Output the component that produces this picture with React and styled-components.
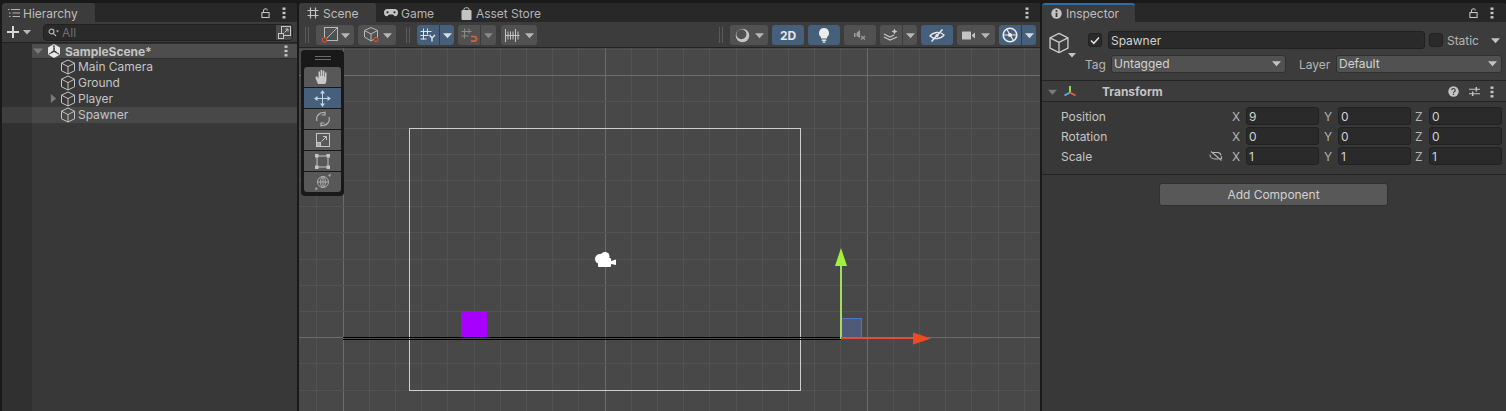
import React from 'react'
import styled, { createGlobalStyle, css } from 'styled-components'

const Global = createGlobalStyle`
  html, body { margin: 0; padding: 0; background: #191919; overflow: hidden; }
  * { box-sizing: border-box; }
`

const Editor = styled.div`
  display: flex;
  gap: 2px;
  width: 1506px;
  height: 411px;
  padding: 3px 0 0 2px;
  background: #191919;
  font-family: Inter, "Noto Sans", sans-serif;
  font-size: 12px;
  letter-spacing: -0.03px;
  color: #c4c4c4;
  overflow: hidden;
`

const Panel = styled.section`
  display: flex;
  flex-direction: column;
  width: ${p => p.$w}px;
  flex: none;
  background: #383838;
  border-radius: 3px 3px 0 0;
  overflow: hidden;
`

const TabBar = styled.div`
  display: flex;
  align-items: stretch;
  height: 19px;
  flex: none;
  background: #282828;
`

const Tab = styled.div`
  display: flex;
  align-items: center;
  gap: ${p => p.$gap || 5}px;
  width: ${p => p.$w}px;
  padding-left: ${p => p.$pad || 8}px;
  padding-top: ${p => (p.$accent ? 0 : 1)}px;
  background: ${p => (p.$active ? '#3c3c3c' : 'transparent')};
  border-top: ${p => (p.$accent ? '2px solid #2c6ea8' : 'none')};
  color: ${p => (p.$active ? '#bdbdbd' : '#b4b4b4')};
  border-radius: 3px 3px 0 0;
`

const TabIcons = styled.div`
  display: flex;
  align-items: center;
  gap: 12px;
  margin-left: auto;
  padding-right: ${p => p.$pad || 8}px;
`

const Toolbar = styled.div`
  display: flex;
  align-items: center;
  flex: none;
  height: ${p => p.$h}px;
  padding-top: ${p => p.$top || 0}px;
  background: #3c3c3c;
  border-bottom: 1px solid #232323;
`

const AddButton = styled.div`
  display: flex;
  align-items: center;
  gap: 4px;
  width: 41px;
  padding-left: 5px;
`

const SearchBox = styled.div`
  display: flex;
  width: 250px;
  height: 17px;
  background: #2a2a2a;
  border: 1px solid #212121;
  border-radius: 4px;
  align-items: center;
  padding-left: 4px;
  gap: 3px;
  color: #6e6e6e;
`

const SearchEnd = styled.div`
  display: flex;
  align-items: center;
  justify-content: center;
  width: 16px;
  height: 15px;
  margin-left: auto;
  background: #4a4a4a;
  border-radius: 0 3px 3px 0;
`

const Tree = styled.div`
  flex: 1;
  background: linear-gradient(90deg, #303030 0 30px, #383838 30px);
`

const SceneRow = styled.div`
  display: flex;
  align-items: center;
  height: 16px;
  margin-left: 30px;
  padding-right: 9px;
  background: #4d4d4d;
  border-top: 1px solid #2e2e2e;
  border-bottom: 1px solid #2e2e2e;
  font-weight: 700;
  color: #c4c4c4;
`

const TreeRow = styled.div`
  display: flex;
  align-items: center;
  height: 16px;
  padding-bottom: 1px;
  background: ${p => (p.$selected ? 'linear-gradient(90deg, #3e3e3e 0 30px, #484848 30px)' : 'transparent')};
  color: #c4c4c4;
  white-space: nowrap;
`

const Caret = styled.div`
  width: ${p => p.$w}px;
  flex: none;
  display: flex;
  justify-content: flex-end;
  align-items: center;
  padding-right: ${p => p.$pad || 0}px;
`

const Grip = styled.div`
  width: 4px;
  height: 16px;
  flex: none;
  margin: ${p => p.$m};
  border-left: 1px solid #5a5a5a;
  border-right: 1px solid #5a5a5a;
`

const segment = css`
  display: flex;
  align-items: center;
  justify-content: center;
  height: 20px;
  flex: none;
  background: ${p => (p.$on ? '#46607c' : '#515151')};
`

const ToolButton = styled.div`
  ${segment}
  width: ${p => p.$w}px;
  margin-left: ${p => p.$ml || 0}px;
  gap: ${p => p.$gap || 2}px;
  border-radius: 3px;
  color: #e6e6e6;
  font-weight: 700;
  font-size: 12px;
`

const Split = styled.div`
  display: flex;
  flex: none;
  gap: 1px;
  margin-left: ${p => p.$ml || 0}px;
  margin-right: ${p => p.$mr || 0}px;
`

const SplitMain = styled.div`
  ${segment}
  width: ${p => p.$w}px;
  border-radius: 3px 0 0 3px;
`

const SplitDrop = styled.div`
  ${segment}
  width: ${p => p.$w || 14}px;
  border-radius: 0 3px 3px 0;
`

const Viewport = styled.div`
  position: relative;
  flex: 1;
  background: #484848;
  overflow: hidden;
`

const SceneSvg = styled.svg`
  display: block;
  width: 741px;
  height: 363px;
`

const ToolBox = styled.div`
  position: absolute;
  left: 2px;
  top: 2px;
  width: 43px;
  height: 146px;
  padding: 0 3px;
  background: #191919;
  border-radius: 4px;
`

const ToolGrip = styled.div`
  width: 16px;
  height: 4px;
  margin: 6px auto 7px;
  border-top: 1px solid #6a6a6a;
  border-bottom: 1px solid #6a6a6a;
`

const ToolItem = styled.div`
  display: flex;
  align-items: center;
  justify-content: center;
  height: 20px;
  margin-bottom: 1px;
  background: ${p => (p.$on ? '#46607c' : '#585858')};
  border-radius: ${p => p.$r || '0'};
`

const InspectorHead = styled.div`
  display: flex;
  flex: none;
  height: 59px;
  background: #3c3c3c;
  border-bottom: 1px solid #232323;
  padding: 9px 4px 0 6px;
`

const ObjectIcon = styled.div`
  position: relative;
  width: 37px;
  flex: none;
  padding-top: 1px;
`

const DropMark = styled.div`
  position: absolute;
  display: flex;
  left: 20px;
  top: 20px;
`

const HeadRows = styled.div`
  display: flex;
  flex-direction: column;
  flex: 1;
  gap: 6px;
`

const HeadRow = styled.div`
  display: flex;
  align-items: center;
  height: 18px;
`

const Check = styled.div`
  display: flex;
  align-items: center;
  justify-content: center;
  width: 14px;
  height: 14px;
  flex: none;
  margin-left: ${p => p.$ml}px;
  background: #2a2a2a;
  border: 1px solid #212121;
  border-radius: 3px;
`

const TextField = styled.div`
  display: flex;
  align-items: center;
  width: ${p => p.$w}px;
  height: ${p => p.$h || 18}px;
  flex: none;
  margin-left: ${p => p.$ml || 0}px;
  padding-left: 2px;
  background: #2a2a2a;
  border: 1px solid #212121;
  border-radius: 3px;
  color: #d2d2d2;
`

const Label = styled.span`
  display: flex;
  flex: none;
  width: ${p => (p.$w ? `${p.$w}px` : 'auto')};
  margin-left: ${p => p.$ml || 0}px;
  color: ${p => p.$color || '#b4b4b4'};
`

const Dropdown = styled.div`
  display: flex;
  align-items: center;
  justify-content: space-between;
  width: ${p => p.$w}px;
  height: 18px;
  flex: none;
  margin-left: ${p => p.$ml || 0}px;
  padding: 0 4px 1px 2px;
  background: #515151;
  border: 1px solid #303030;
  border-radius: 3px;
  color: #d2d2d2;
`

const ComponentHead = styled.div`
  display: flex;
  align-items: center;
  flex: none;
  height: 21px;
  padding: 1px 12px 0 6px;
  background: #3c3c3c;
  border-bottom: 1px solid #232323;
  font-weight: 700;
  color: #c4c4c4;
`

const HeadIcons = styled.div`
  display: flex;
  align-items: center;
  gap: ${p => p.$gap || 8}px;
  margin-left: auto;
`

const Fields = styled.div`
  display: flex;
  flex-direction: column;
  flex: none;
  gap: 2px;
  height: 73px;
  padding-top: 5px;
  border-bottom: 1px solid #232323;
`

const FieldRow = styled.div`
  display: flex;
  align-items: center;
  height: 18px;
  padding-left: 19px;
`

const RowName = styled.span`
  flex: none;
  width: 148px;
`

const LinkSlot = styled.div`
  display: flex;
  width: 23px;
  flex: none;
`

const AddRow = styled.div`
  display: flex;
  justify-content: center;
  padding: 8px 0 0 0;
  margin-left: -1px;
`

const AddComponent = styled.div`
  display: flex;
  align-items: center;
  justify-content: center;
  width: 229px;
  height: 23px;
  background: #585858;
  border: 1px solid #303030;
  border-radius: 3px;
  color: #d2d2d2;
`

const Arrow = ({ color = '#b8b8b8', dir = 'down', size = 9 }) => (
  <svg width={size} height={size} viewBox="0 0 10 10">
    {dir === 'down' && <path d="M0 2.5h10L5 8z" fill={color} />}
    {dir === 'right' && <path d="M2 0v10l6-5z" fill={color} />}
  </svg>
)

const Lock = () => (
  <svg width="9" height="12" viewBox="0 0 10 12" fill="none" stroke="#c4c4c4" strokeWidth="1.2">
    <rect x="1" y="5.5" width="8" height="5.5" />
    <path d="M2.8 5.500V3a2.300 2.300 0 0 1 4.400 0" />
  </svg>
)

const Dots = () => (
  <svg width="4" height="12" viewBox="0 0 4 12" fill="#c4c4c4">
    <rect x="0.5" y="0.5" width="3" height="2.4" />
    <rect x="0.5" y="4.8" width="3" height="2.4" />
    <rect x="0.5" y="9.1" width="3" height="2.4" />
  </svg>
)

const Cube = ({ size = 16, color = '#c4c4c4', width = 1 }) => (
  <svg width={size} height={size} viewBox="0 0 16 16" fill="none" stroke={color} strokeWidth={width} strokeLinejoin="round">
    <path d="M8 1L14.500 4.200V11.800L8 15L1.500 11.800V4.200Z" />
    <path d="M1.500 4.200L8 7.600L14.500 4.200M8 7.600V15" />
  </svg>
)

const HashIcon = () => (
  <svg width="12" height="12" viewBox="0 0 12 12" stroke="#c4c4c4" strokeWidth="1.2">
    <path d="M3.500 0.500v11M8.500 0.500v11M0.500 3.500h11M0.500 8.500h11" />
  </svg>
)

const ListIcon = () => (
  <svg width="12" height="10" viewBox="0 0 12 10" stroke="#b4b4b4" strokeWidth="1">
    <path d="M3 1.500h9M4.500 5h7.500M4.500 8.500h7.500" />
    <path d="M0 1.500h1.500M1 5h1.500M1 8.500h1.500" />
  </svg>
)

const GamepadIcon = () => (
  <svg width="14" height="8" viewBox="0 0 14 8">
    <path d="M3.500 0h7A3.500 3.500 0 0 1 14 3.500C14 6.500 12 8 10.500 7L9 5.500H5L3.500 7C2 8 0 6.500 0 3.500A3.500 3.500 0 0 1 3.500 0Z" fill="#c4c4c4" />
    <circle cx="3.500" cy="3.300" r="1.100" fill="#282828" />
    <circle cx="10.500" cy="3.300" r="1.100" fill="#282828" />
  </svg>
)

const BagIcon = () => (
  <svg width="11" height="13" viewBox="0 0 11 13">
    <rect x="0.500" y="3" width="10" height="10" rx="1" fill="#c4c4c4" />
    <path d="M3 4V2.200A1.500 1.500 0 0 1 4.500 0.800h2A1.500 1.500 0 0 1 8 2.200V4" fill="none" stroke="#c4c4c4" />
  </svg>
)

const SearchIcon = () => (
  <svg width="11" height="9" viewBox="0 0 11 9" fill="none" stroke="#b4b4b4" strokeWidth="1.2">
    <circle cx="3.500" cy="3.500" r="2.400" />
    <path d="M5.400 5.400L8 8" />
    <path d="M8 2.500h3L9.500 4.500z" fill="#b4b4b4" stroke="none" />
  </svg>
)

const MaximizeIcon = () => (
  <svg width="13" height="13" viewBox="0 0 13 13" fill="none" stroke="#c4c4c4">
    <rect x="3.500" y="0.500" width="9" height="9" />
    <rect x="0.500" y="7.500" width="5" height="5" fill="#4a4a4a" />
    <path d="M6.500 6.500L10 3M7.500 3H10V5.500" />
  </svg>
)

const UnityLogo = () => (
  <svg width="14" height="14" viewBox="0 0 14 14">
    <path d="M7 0L13 3.500V10.500L7 14L1 10.500V3.500Z" fill="#e8e8e8" />
    <path d="M7 6.600V3.200M7 7L10 8.800M7 7L4 8.800" stroke="#3c3c3c" strokeWidth="1.5" />
    <path d="M7 0.200L8 3H6Z M1 10.500L3.200 8.400L4 10Z M13 10.500L10.800 8.400L10 10Z" fill="#3c3c3c" />
  </svg>
)

const RectToolIcon = () => (
  <svg width="18" height="18" viewBox="0 0 18 18" fill="none">
    <rect x="3.500" y="1.500" width="13" height="13" stroke="#b8b8b8" />
    <path d="M5 13L16 2" stroke="#b8b8b8" />
    <circle cx="3.500" cy="14" r="2.300" stroke="#e8572c" strokeWidth="1" fill="#515151" />
  </svg>
)

const CubeToolIcon = () => (
  <svg width="18" height="18" viewBox="0 0 18 18" fill="none">
    <path d="M8 1.500L14.500 4.500V11L8 15L1.500 11V4.500Z M1.500 4.500L8 8L14.500 4.500M8 8V15" stroke="#b8b8b8" />
    <circle cx="13" cy="13.500" r="2.200" stroke="#e8572c" strokeWidth="1" fill="#515151" />
  </svg>
)

const GridSnapIcon = () => (
  <svg width="16" height="14" viewBox="0 0 16 14" stroke="#e4e4e4" fill="none">
    <path d="M3.500 0.500v11M7.500 0.500v6M0.500 3.500h11M0.500 7.500h8M0.500 11h6" />
    <path d="M9.500 7L12 10V13.500M15 7L12 10" strokeWidth="1.4" />
  </svg>
)

const MagnetIcon = () => (
  <svg width="17" height="15" viewBox="0 0 17 15" fill="none">
    <path d="M3.500 0.500v10M8 0.500v5M0.500 3.500h10M0.500 8h7" stroke="#8a8a8a" />
    <path d="M10 8.500h3.200a2.300 2.300 0 0 1 0 4.600H10" stroke="#d0663a" strokeWidth="1.6" />
  </svg>
)

const RulerIcon = () => (
  <svg width="15" height="13" viewBox="0 0 15 13" stroke="#c4c4c4">
    <path d="M0.500 0v13M3 2.500v8M5.500 2.500v8M8 2.500v8M10.500 0v13M13 2.500v8M0.500 6.500h14" />
  </svg>
)

const SphereIcon = () => (
  <svg width="15" height="15" viewBox="0 0 15 15">
    <circle cx="7.500" cy="7.500" r="6.800" fill="#c4c4c4" />
    <circle cx="6.400" cy="6.200" r="5" fill="#515151" />
  </svg>
)

const BulbIcon = () => (
  <svg width="12" height="15" viewBox="0 0 12 15" fill="#ececec">
    <path d="M6 0a5 5 0 0 1 3 9v1.500H3V9A5 5 0 0 1 6 0Z" />
    <rect x="3.800" y="11.500" width="4.400" height="1.400" />
    <rect x="4.600" y="13.400" width="2.800" height="1.300" />
  </svg>
)

const AudioIcon = () => (
  <svg width="12" height="10" viewBox="0 0 12 10" fill="#9c9c9c">
    <rect x="0" y="3" width="1.500" height="4" />
    <path d="M2.500 3L6 0v8L2.500 6Z" />
    <path d="M7 6l4 3.500M11 6l-4 3.500" stroke="#9c9c9c" strokeWidth="1.2" />
  </svg>
)

const FxIcon = () => (
  <svg width="17" height="15" viewBox="0 0 17 15" fill="none" stroke="#c4c4c4" strokeWidth="1.3">
    <path d="M1 9l6 3 7-3M1 6l6 3 4-2" />
    <path d="M11.500 0.500l0.900 2.100 2.100 0.900-2.100 0.900-0.900 2.100-0.900-2.100-2.100-0.900 2.100-0.900Z" fill="#c4c4c4" stroke="none" />
  </svg>
)

const HiddenIcon = () => (
  <svg width="16" height="13" viewBox="0 0 16 13" fill="none" stroke="#e8e8e8" strokeWidth="1.3">
    <path d="M1 7c3-4 10-5 14-1-3 4-10 5-14 1Z" />
    <circle cx="8" cy="6.500" r="1.600" fill="#e8e8e8" stroke="none" />
    <path d="M2.500 12.500L13.500 0.500" strokeWidth="1.5" />
  </svg>
)

const CameraIcon = () => (
  <svg width="13" height="9" viewBox="0 0 13 9" fill="#c4c4c4">
    <rect x="0" y="0.500" width="9" height="8" rx="0.500" />
    <path d="M10 4l3-2.500v6L10 5Z" />
  </svg>
)

const GizmoIcon = () => (
  <svg width="16" height="16" viewBox="0 0 16 16" fill="none" stroke="#ececec" strokeWidth="1.6">
    <circle cx="8" cy="8" r="6.800" />
    <path d="M1.500 8h13M8 8L5 2.500M8 8l3.500 5.500" strokeWidth="1.2" />
    <circle cx="8" cy="8" r="2" fill="#ececec" stroke="none" />
  </svg>
)

const CheckMark = () => (
  <svg width="10" height="9" viewBox="0 0 10 9" fill="none" stroke="#e0e0e0" strokeWidth="1.5">
    <path d="M1 4.500L3.800 7.300L9 1.500" />
  </svg>
)

const TransformIcon = () => (
  <svg width="14" height="14" viewBox="0 0 14 14" fill="none" strokeWidth="1.8">
    <path d="M7 7V1" stroke="#a8e04c" />
    <path d="M7 7.500L1.500 10.500" stroke="#4fb4e8" />
    <path d="M7 7.500L12.500 10.500" stroke="#e8623c" />
  </svg>
)

const HelpIcon = () => (
  <svg width="11" height="11" viewBox="0 0 11 11">
    <circle cx="5.500" cy="5.500" r="5.200" fill="#c4c4c4" />
    <path d="M3.800 4.300a1.700 1.700 0 1 1 2.500 1.400c-.6.300-.8.600-.8 1.100" fill="none" stroke="#3c3c3c" strokeWidth="1.2" />
    <rect x="4.900" y="7.600" width="1.200" height="1.300" fill="#3c3c3c" />
  </svg>
)

const SlidersIcon = () => (
  <svg width="11" height="11" viewBox="0 0 12 11" stroke="#c4c4c4" strokeWidth="1.2">
    <path d="M0 3h12M0 8h12" />
    <path d="M8 0.500v5M4 5.500v5" strokeWidth="1.6" />
  </svg>
)

const LinkOffIcon = () => (
  <svg width="14" height="10" viewBox="0 0 14 10" fill="none" stroke="#b4b4b4" strokeWidth="1.1">
    <path d="M3.500 1.500h5a3.500 3.500 0 0 1 3.500 3" />
    <path d="M1 3.500C1 6 3 8 5.500 8h4" />
    <path d="M2 0.500L12.500 9.500" />
    <path d="M12 5.500c1 1 1 2-1 3" />
  </svg>
)

const HandIcon = () => (
  <svg width="15" height="16" viewBox="0 0 15 16" fill="#c8c8c8">
    <path d="M3 15L0.500 9C0 7.600 1.800 7 2.500 8L3.500 9.500V3C3.500 2 5 2 5 3V7H5.600V1.500C5.600 0.500 7.200 0.500 7.200 1.500V7H7.800V2.200C7.800 1.200 9.400 1.200 9.400 2.200V7.500H10V4C10 3 11.500 3 11.500 4V10C11.500 12.500 11 14 10 15Z" />
  </svg>
)

const MoveIcon = () => (
  <svg width="17" height="17" viewBox="0 0 17 17" fill="#c3d4e6">
    <path d="M8 3h1v11H8zM3 8h11v1H3z" />
    <path d="M8.500 0L11 3.500H6zM8.500 17L11 13.500H6zM0 8.500L3.500 6v5zM17 8.500L13.500 6v5z" />
  </svg>
)

const RotateIcon = () => (
  <svg width="16" height="16" viewBox="0 0 16 16" fill="none" stroke="#b4b4b4" strokeWidth="1.2">
    <path d="M2 10A6.500 6.500 0 0 1 10 1.800" />
    <path d="M14 6A6.500 6.500 0 0 1 6 14.200" />
    <path d="M10 0.500v3.500h-3.500M6 15.500v-3.500h3.500" />
  </svg>
)

const ScaleIcon = () => (
  <svg width="14" height="14" viewBox="0 0 14 14" fill="none" stroke="#c4c4c4">
    <rect x="0.500" y="0.500" width="13" height="13" />
    <rect x="0.500" y="9.500" width="4" height="4" fill="#a8a8a8" />
    <path d="M5.500 8.500L10 4M7 3.500h3.500V7" />
  </svg>
)

const RectIcon = () => (
  <svg width="15" height="15" viewBox="0 0 15 15" fill="#c4c4c4">
    <path d="M2 2h11v11H2z" fill="none" stroke="#c4c4c4" />
    <rect x="0" y="0" width="3.500" height="3.500" />
    <rect x="11.500" y="0" width="3.500" height="3.500" />
    <rect x="0" y="11.500" width="3.500" height="3.500" />
    <rect x="11.500" y="11.500" width="3.500" height="3.500" />
  </svg>
)

const ComboIcon = () => (
  <svg width="16" height="16" viewBox="0 0 16 16" fill="none" stroke="#adadad">
    <circle cx="8" cy="8" r="5.500" />
    <path d="M2.500 8h11M8 2.500v11" />
    <ellipse cx="8" cy="8" rx="2.400" ry="5.500" />
    <path d="M0 16l3-1-2-2zM16 0l-3 1 2 2z" fill="#adadad" stroke="none" />
  </svg>
)

const gridXs = Array.from({ length: 29 }, (_, i) => 316.8 + i * 26.2)
const gridYs = Array.from({ length: 14 }, (_, i) => 49.5 + i * 26.2)

// svg viewBox uses page coordinates so the scene drawing lines up with the screenshot
const SceneDrawing = () => (
  <SceneSvg viewBox="299 48 741 363">
    {gridXs.map((x, i) => {
      const major = i % 10 === 1
      return <line key={x} x1={x} x2={x} y1="48" y2="411" stroke={major ? '#6c6c6c' : '#525252'} shapeRendering="crispEdges" />
    })}
    {gridYs.map((y, i) => {
      const major = i === 1 || i === 11
      return <line key={y} x1="299" x2="1040" y1={y} y2={y} stroke={major ? '#6c6c6c' : '#525252'} shapeRendering="crispEdges" />
    })}
    <rect x="409.5" y="128.5" width="391" height="261.5" fill="none" stroke="#cfcfcf" shapeRendering="crispEdges" />
    <rect x="461" y="312" width="26" height="25" fill="#a800ff" />
    <path d="M343 337.5H841M343 339.5H841" stroke="#000" shapeRendering="crispEdges" />
    <rect x="841.5" y="318.5" width="20" height="19.5" fill="#4f5a78" stroke="#4a78c8" shapeRendering="crispEdges" />
    <rect x="840" y="262" width="2" height="77" fill="#a4dc5c" />
    <path d="M841 248L847 266H835Z" fill="#a0f03c" />
    <rect x="841" y="337" width="74" height="2" fill="#dc5236" />
    <path d="M913 332.5L931 338.5L913 344.5Z" fill="#f04a20" />
    <g fill="#fff">
      <circle cx="605" cy="256.500" r="4.500" />
      <circle cx="600" cy="259" r="5" />
      <rect x="598" y="258" width="13" height="9" rx="1" />
      <path d="M611 261L616 259.500V265L611 264Z" />
    </g>
  </SceneSvg>
)

const App = () => (
  <>
    <Global />
    <Editor>
      <Panel $w={295}>
        <TabBar>
          <Tab $active $w={93} $gap={3} $pad={6}><ListIcon />Hierarchy</Tab>
          <TabIcons $pad={11}><Lock /><Dots /></TabIcons>
        </TabBar>
        <Toolbar $h={21}>
          <AddButton>
            <svg width="12" height="12" viewBox="0 0 12 12" fill="#d8d8d8"><path d="M5 0h2v5h5v2H7v5H5V7H0V5h5z" /></svg>
            <Arrow size={8} />
          </AddButton>
          <SearchBox>
            <SearchIcon />All
            <SearchEnd><MaximizeIcon /></SearchEnd>
          </SearchBox>
        </Toolbar>
        <Tree>
          <SceneRow>
            <Caret $w={11}><Arrow color="#7a7a7a" size={10} /></Caret>
            <Caret $w={22} $pad={4}><UnityLogo /></Caret>
            <span>SampleScene*</span>
            <HeadIcons><Dots /></HeadIcons>
          </SceneRow>
          {['Main Camera', 'Ground', 'Player', 'Spawner'].map(name => (
            <TreeRow key={name} $selected={name === 'Spawner'}>
              <Caret $w={58} $pad={2}>{name === 'Player' && <Arrow color="#7a7a7a" dir="right" />}</Caret>
              <Cube />
              <Label $ml={2} $color="#c4c4c4">{name}</Label>
            </TreeRow>
          ))}
        </Tree>
      </Panel>

      <Panel $w={741}>
        <TabBar>
          <Tab $active $w={77} $pad={8} $gap={4}><HashIcon />Scene</Tab>
          <Tab $w={77} $pad={8} $gap={3}><GamepadIcon />Game</Tab>
          <Tab $w={140} $pad={8} $gap={4}><BagIcon />Asset Store</Tab>
          <TabIcons $pad={11}><Dots /></TabIcons>
        </TabBar>
        <Toolbar $h={26} $top={1}>
          <Grip $m="0 0 0 6px" />
          <ToolButton $w={38} $ml={7}><RectToolIcon /><Arrow /></ToolButton>
          <ToolButton $w={38} $ml={4}><CubeToolIcon /><Arrow /></ToolButton>
          <Grip $m="0 0 0 10px" />
          <Split $ml={7}>
            <SplitMain $on $w={22}><GridSnapIcon /></SplitMain>
            <SplitDrop $on $w={14}><Arrow color="#d4dce4" /></SplitDrop>
          </Split>
          <Split $ml={4}>
            <SplitMain $w={22}><MagnetIcon /></SplitMain>
            <SplitDrop $w={15}><Arrow color="#888" /></SplitDrop>
          </Split>
          <ToolButton $w={36} $ml={5} $gap={5}><RulerIcon /><Arrow /></ToolButton>
          <Grip $m="0 0 0 auto" />
          <ToolButton $w={38} $ml={7} $gap={5}><SphereIcon /><Arrow /></ToolButton>
          <ToolButton $on $w={32} $ml={4}>2D</ToolButton>
          <ToolButton $on $w={32} $ml={4}><BulbIcon /></ToolButton>
          <ToolButton $w={32} $ml={4}><AudioIcon /></ToolButton>
          <Split $ml={4}>
            <SplitMain $w={22}><FxIcon /></SplitMain>
            <SplitDrop $w={14}><Arrow /></SplitDrop>
          </Split>
          <ToolButton $on $w={32} $ml={4}><HiddenIcon /></ToolButton>
          <ToolButton $w={38} $ml={4} $gap={6}><CameraIcon /><Arrow /></ToolButton>
          <Split $ml={4} $mr={4}>
            <SplitMain $on $w={22}><GizmoIcon /></SplitMain>
            <SplitDrop $on $w={14}><Arrow color="#d4dce4" /></SplitDrop>
          </Split>
        </Toolbar>
        <Viewport>
          <SceneDrawing />
          <ToolBox>
            <ToolGrip />
            <ToolItem $r="3px 3px 0 0"><HandIcon /></ToolItem>
            <ToolItem $on><MoveIcon /></ToolItem>
            <ToolItem><RotateIcon /></ToolItem>
            <ToolItem><ScaleIcon /></ToolItem>
            <ToolItem><RectIcon /></ToolItem>
            <ToolItem $r="0 0 3px 3px"><ComboIcon /></ToolItem>
          </ToolBox>
        </Viewport>
      </Panel>

      <Panel $w={464}>
        <TabBar>
          <Tab $active $accent $w={93} $pad={9} $gap={4}>
            <svg width="11" height="11" viewBox="0 0 11 11">
              <circle cx="5.500" cy="5.500" r="5.200" fill="#c4c4c4" />
              <path d="M4.600 2h1.800v1.700H4.600zM4.600 4.700h1.800V9H4.600z" fill="#3c3c3c" />
            </svg>
            Inspector
          </Tab>
          <TabIcons $pad={12}><Lock /><Dots /></TabIcons>
        </TabBar>
        <InspectorHead>
          <ObjectIcon>
            <Cube size={22} color="#c8c8c8" />
            <DropMark><Arrow size={8} color="#c4c4c4" /></DropMark>
          </ObjectIcon>
          <HeadRows>
            <HeadRow>
              <Check $ml={3}><CheckMark /></Check>
              <TextField $w={317} $ml={6}>Spawner</TextField>
              <Check $ml={4} />
              <Label $ml={4}>Static</Label>
              <Label $ml={12}><Arrow color="#c4c4c4" /></Label>
            </HeadRow>
            <HeadRow>
              <Label $w={26}>Tag</Label>
              <Dropdown $w={175}>Untagged<Arrow color="#c4c4c4" /></Dropdown>
              <Label $ml={13} $w={37}>Layer</Label>
              <Dropdown $w={166}>Default<Arrow color="#c4c4c4" /></Dropdown>
            </HeadRow>
          </HeadRows>
        </InspectorHead>
        <ComponentHead>
          <Caret $w={9}><Arrow color="#7a7a7a" size={10} /></Caret>
          <Label $ml={6}><TransformIcon /></Label>
          <Label $ml={25} $color="#c4c4c4">Transform</Label>
          <HeadIcons $gap={10}><HelpIcon /><SlidersIcon /><Dots /></HeadIcons>
        </ComponentHead>
        <Fields>
          {[['Position', '9', '0', '0'], ['Rotation', '0', '0', '0'], ['Scale', '1', '1', '1']].map(([name, x, y, z]) => (
            <FieldRow key={name}>
              <RowName>{name}</RowName>
              <LinkSlot>{name === 'Scale' && <LinkOffIcon />}</LinkSlot>
              <Label $w={14}>X</Label>
              <TextField $w={73} $h={18}>{x}</TextField>
              <Label $ml={5} $w={14}>Y</Label>
              <TextField $w={73} $h={18}>{y}</TextField>
              <Label $ml={4} $w={14}>Z</Label>
              <TextField $w={73} $h={18}>{z}</TextField>
            </FieldRow>
          ))}
        </Fields>
        <AddRow><AddComponent>Add Component</AddComponent></AddRow>
      </Panel>
    </Editor>
  </>
)

export default App
